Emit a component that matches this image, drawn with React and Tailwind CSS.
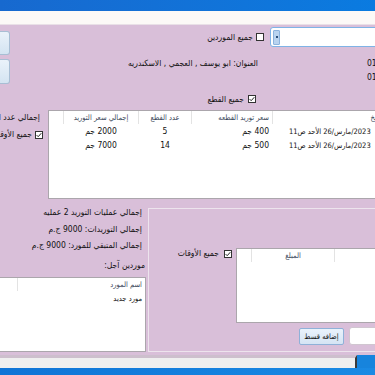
import React from 'react';

const Check = ({ checked }) => (
  <svg width="8" height="8" viewBox="0 0 8 8" className="shrink-0">
    <rect x="0.5" y="0.5" width="7" height="7" fill="#fff" stroke="#333" />
    {checked && <path d="M1.6 4.1 L3.2 5.7 L6.3 2.2" fill="none" stroke="#222" strokeWidth="1" />}
  </svg>
);

const Ar = ({ children, className = '' }) => (
  <span dir="rtl" className={`whitespace-nowrap ${className}`}>
    {children}
  </span>
);

const DateCell = () => (
  <div className="flex items-center gap-[2px] pl-[16px] whitespace-nowrap text-[7.5px]">
    <span className="flex">
      <span>11</span>
      <span>ص</span>
    </span>
    <span>الأحد</span>
    <span className="flex">
      <span>26/</span>
      <span>مارس</span>
      <span>/2023</span>
    </span>
  </div>
);

const rows = [
  { total: '2000', count: '5', price: '400' },
  { total: '7000', count: '14', price: '500' },
];

export default function App() {
  return (
    <div className="w-[375px] h-[375px] overflow-hidden flex flex-col bg-[#d9bfd9] text-[8.5px] leading-[11px] text-[#111] font-['DejaVu_Sans_Condensed','DejaVu_Sans',sans-serif]">
      {/* title bar + menu strip */}
      <div className="h-[11px] shrink-0 bg-linear-to-r from-[#1769cf] to-[#0a7be0]" />
      <div className="h-[14px] shrink-0 bg-[#fcf9f7] border-b border-[#e9e0e7]" />

      <div className="h-[330px] shrink-0 flex flex-col">
        {/* Top section */}
        <div className="h-[85px] flex">
          <div className="w-[10px] shrink-0 flex flex-col">
            <div className="mt-[6px] h-[24px] w-[10px] border border-l-0 border-[#a8bed4] rounded-r-[3px] bg-linear-to-b from-[#eaf2fa] to-[#d4e4f2]" />
            <div className="mt-[4px] h-[25px] w-[10px] border border-l-0 border-[#a8bed4] rounded-r-[3px] bg-linear-to-b from-[#eaf2fa] to-[#d4e4f2]" />
          </div>
          <div className="flex-1 flex flex-col items-end">
            <div className="mt-[2px] h-[20px] flex items-center">
              <Ar>جميع الموردين</Ar>
              <span className="ml-[3px]"><Check /></span>
              <div className="ml-[6px] -mr-[10px] w-[115px] h-[20px] bg-white border border-[#7fb3e6] rounded-[3px] flex items-center pl-[2px]">
                <div className="w-[7px] h-[15px] bg-[#b9d3ef] border border-[#8cb3dd] rounded-[1px] flex items-center justify-center">
                  <div className="w-[2px] h-[2px] bg-[#2a4f7a]" />
                </div>
              </div>
            </div>
            <div className="mt-[9px] h-[14px] flex items-center">
              <Ar>العنوان: ابو يوسف , العجمي , الاسكندريه</Ar>
              <div className="w-[117px] shrink-0 pl-[109px] whitespace-nowrap">0111</div>
            </div>
            <div className="h-[14px] flex items-center">
              <div className="w-[117px] shrink-0 pl-[109px] whitespace-nowrap">0122</div>
            </div>
            <div className="mt-[9px] h-[12px] flex items-center mr-[119px]">
              <Ar>جميع القطع</Ar>
              <span className="ml-[4px]"><Check checked /></span>
            </div>
          </div>
        </div>

        {/* Table section */}
        <div className="h-[97px] flex">
          <div className="w-[48px] shrink-0 flex flex-col items-end">
            <div className="mt-[2px] h-[11px] mr-[8px]">
              <Ar>إجمالي عدد القطع</Ar>
            </div>
            <div className="mt-[6px] h-[11px] mr-[5px] flex items-center">
              <Ar>جميع الأوقات</Ar>
              <span className="ml-[3px]"><Check checked /></span>
            </div>
          </div>
          <div className="w-[345px] shrink-0 h-[89px] bg-white border border-[#aba6ac]">
            <div className="h-[13px] flex text-[7.5px] text-[#3d4a5c]">
              <div className="w-[14px] shrink-0" />
              <div className="w-[75px] shrink-0 border-l border-[#e3e3e3] flex items-center justify-center">
                <Ar>إجمالي سعر التوريد</Ar>
              </div>
              <div className="w-[53px] shrink-0 border-l border-[#e3e3e3] flex items-center justify-center">
                <Ar>عدد القطع</Ar>
              </div>
              <div className="w-[81px] shrink-0 border-l border-[#e3e3e3] flex items-center justify-end pr-[3px]">
                <Ar>سعر توريد القطعه</Ar>
              </div>
              <div className="w-[120px] shrink-0 border-l border-[#e3e3e3] flex items-center justify-end pr-[4px]">
                <Ar>التاريخ</Ar>
              </div>
            </div>
            {rows.map((r, i) => (
              <div key={i} className="h-[14px] flex items-center">
                <div className="w-[14px] shrink-0" />
                <div className="w-[75px] shrink-0 pl-px flex justify-center">
                  <Ar>{r.total} جم</Ar>
                </div>
                <div className="w-[53px] shrink-0 pl-px flex justify-center">{r.count}</div>
                <div className="w-[81px] shrink-0 pl-px flex justify-end pr-[3px]">
                  <Ar>{r.price} جم</Ar>
                </div>
                <div className="w-[120px] shrink-0 pl-px">
                  <DateCell />
                </div>
              </div>
            ))}
          </div>
        </div>

        {/* Bottom section */}
        <div className="h-[145px] flex">
          <div className="w-[146px] shrink-0 flex flex-col items-end">
            <div className="h-[11px] mr-[4px]">
              <Ar>إجمالي عمليات التوريد 2 عمليه</Ar>
            </div>
            <div className="mt-[6px] h-[11px] mr-[4px]">
              <Ar>إجمالي التوريدات: 9000 ج.م</Ar>
            </div>
            <div className="mt-[5px] h-[11px] mr-[4px]">
              <Ar>إجمالي المتبقي للمورد: 9000 ج.م</Ar>
            </div>
            <div className="mt-[9px] h-[11px] mr-[1px]">
              <Ar>موردين آجل:</Ar>
            </div>
            <div className="mt-[6px] w-full h-[75px] bg-white border border-l-0 border-[#aba6ac]">
              <div className="h-[13px] flex text-[7.5px] text-[#3d4a5c]">
                <div className="w-[17px] shrink-0" />
                <div className="flex-1 border-l border-[#e3e3e3] flex items-center justify-end pr-[3px]">
                  <Ar>اسم المورد</Ar>
                </div>
              </div>
              <div className="h-[14px] flex items-center justify-end pr-[3px] text-[7.5px]">
                <Ar>مورد جديد</Ar>
              </div>
            </div>
          </div>

          <div className="ml-[2px] mt-px w-[240px] shrink-0 h-[144px] border border-r-0 border-[#ede4ed] flex flex-col">
            <div className="mt-[39px] flex items-start">
              <div className="w-[87px] shrink-0 h-[11px] flex items-center justify-end pr-[4px]">
                <Ar>جميع الأوقات</Ar>
                <span className="ml-[5px]"><Check checked /></span>
              </div>
              <div className="w-[170px] shrink-0 h-[75px] bg-white border border-[#aba6ac]">
                <div className="h-[13px] flex text-[7.5px] text-[#3d4a5c]">
                  <div className="w-[14px] shrink-0" />
                  <div className="w-[83px] shrink-0 border-l border-[#e3e3e3] flex items-center justify-center">
                    <Ar>المبلغ</Ar>
                  </div>
                  <div className="flex-1 border-l border-[#e3e3e3]" />
                </div>
              </div>
            </div>
            <div className="mt-[4px] flex items-center pl-[150px]">
              <div className="w-[45px] h-[17px] shrink-0 bg-linear-to-b from-[#eaf2fb] to-[#d5e4f4] border border-[#8fb1d8] rounded-[2px] flex items-center justify-center text-[7.5px]">
                <Ar>إضافه قسط</Ar>
              </div>
              <div className="ml-[5px] w-[60px] h-[18px] shrink-0 bg-white border border-[#d0c6d0] rounded-[3px]" />
            </div>
          </div>
        </div>
      </div>

      {/* bottom edge + taskbar */}
      <div className="h-[13px] shrink-0 flex">
        <div className="w-[357px] shrink-0 bg-[#efefef] border-t-[3px] border-[#cdbfcd] border-r-2 border-r-[#3a3a3a]" />
        <div className="flex-1 bg-[#1784dd]" />
      </div>
      <div className="h-[7px] shrink-0 bg-linear-to-r from-[#0f74d6] to-[#1a8ae4]" />
    </div>
  );
}
